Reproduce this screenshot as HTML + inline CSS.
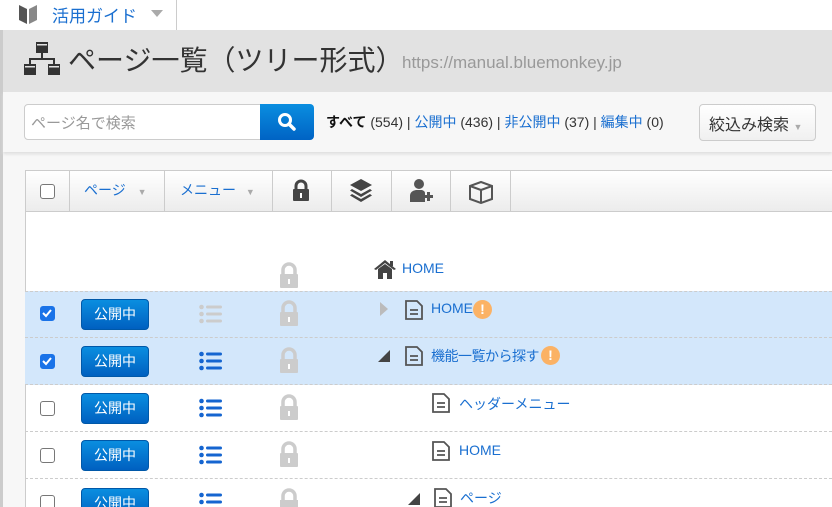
<!DOCTYPE html>
<html style="overflow:hidden;height:507px"><head><meta charset="utf-8"><style>
*{box-sizing:border-box;margin:0;padding:0}
body{width:832px;height:507px;overflow:hidden;background:#f7f7f7;font-family:"Liberation Sans","Noto Sans CJK JP",sans-serif;position:relative;color:#333}
.a{position:absolute}
.blue{color:#1a6fd0}
.cb{position:absolute;left:40px;width:15px;height:15px;border:1.5px solid #777;border-radius:3px;background:#fff}
.cb.on{background:#1a73e8;border-color:#1a73e8}
.btn{position:absolute;left:81px;width:68px;height:31px;border-radius:4px;background:linear-gradient(#0a8ee0,#0060c0);border:1px solid #0058a8;color:#fff;font-size:14px;text-align:center;line-height:29px}
.row{position:absolute;left:25px;width:807px;border-bottom:1px dashed #ccc}
.lnk{font-size:14px;color:#1a6fd0}
</style></head><body>
<div class="a" style="left:0;top:0;width:832px;height:30px;background:#fff"></div>
<div class="a" style="left:176px;top:0;width:1px;height:30px;background:#ccc"></div>
<svg class="a" style="left:18px;top:3px" width="20" height="22" viewBox="0 0 20 22"><path d="M1 2 L9 6 L9 21 L1 17Z" fill="#555"/><path d="M11 6 L19 2 L19 17 L11 21Z" fill="#888"/></svg>
<div class="a blue" style="left:52px;top:2px;font-size:17px">活用ガイド</div>
<div class="a" style="left:151px;top:10px;border:6px solid transparent;border-top:7px solid #aaa"></div>
<div class="a" style="left:0;top:30px;width:3px;height:477px;background:#ccc"></div>
<div class="a" style="left:3px;top:30px;width:829px;height:62px;background:#e2e2e2"></div>
<svg class="a" style="left:24px;top:42px" width="36" height="36" viewBox="0 0 36 36" fill="#333"><rect x="12" y="0" width="12" height="11"/><rect x="13" y="2" width="10" height="1.5" fill="#e2e2e2"/><rect x="17" y="11" width="2" height="6"/><rect x="5" y="16" width="26" height="2"/><rect x="5" y="16" width="2" height="6"/><rect x="29" y="16" width="2" height="6"/><rect x="0" y="22" width="12" height="11"/><rect x="24" y="22" width="12" height="11"/><rect x="1" y="24" width="10" height="1.5" fill="#e2e2e2"/><rect x="25" y="24" width="10" height="1.5" fill="#e2e2e2"/></svg>
<div class="a" style="left:68px;top:39px;font-size:28px;color:#333">ページ一覧（ツリー形式）</div>
<div class="a" style="left:402px;top:53px;font-size:17px;color:#999">https://manual.bluemonkey.jp</div>
<div class="a" style="left:3px;top:92px;width:829px;height:60px;background:#f7f7f7;box-shadow:0 2px 3px #ddd"></div>
<div class="a" style="left:24px;top:104px;width:237px;height:36px;background:#fff;border:1px solid #ccc;border-radius:4px 0 0 4px;font-size:15px;color:#999;padding:7px 6px">ページ名で検索</div>
<div class="a" style="left:260px;top:104px;width:54px;height:36px;background:linear-gradient(#0a8ee0,#0063c4);border-radius:0 4px 4px 0"></div>
<svg class="a" style="left:277px;top:112px" width="20" height="20" viewBox="0 0 20 20"><circle cx="8" cy="8" r="5.5" fill="none" stroke="#fff" stroke-width="3"/><path d="M12 12 L17 17" stroke="#fff" stroke-width="3.5" stroke-linecap="round"/></svg>
<div class="a" style="left:326px;top:112px;font-size:14px;color:#333;white-space:nowrap"><b style="font-weight:bold;color:#111">すべて</b> (554) | <span class="blue">公開中</span> (436) | <span class="blue">非公開中</span> (37) | <span class="blue">編集中</span> (0)</div>
<div class="a" style="left:699px;top:104px;width:117px;height:37px;border:1px solid #ccc;border-radius:4px;background:linear-gradient(#fff,#f0f0f0);font-size:16px;padding:6px 9px;color:#333;white-space:nowrap">絞込み検索 <span style="font-size:9px;color:#aaa">▼</span></div>
<div class="a" style="left:25px;top:170px;width:807px;height:337px;background:#fff;border-left:1px solid #ccc"></div>
<div class="a" style="left:25px;top:170px;width:807px;height:42px;background:linear-gradient(#fff,#ececec);border:1px solid #ccc;border-right:none"></div>
<div class="cb" style="top:184px"></div>
<div class="a" style="left:69px;top:171px;width:1px;height:40px;background:#ccc"></div>
<div class="a lnk" style="left:84px;top:180px">ページ <span style="color:#aaa;font-size:9px;margin-left:8px">▼</span></div>
<div class="a" style="left:164px;top:171px;width:1px;height:40px;background:#ccc"></div>
<div class="a lnk" style="left:180px;top:180px">メニュー <span style="color:#aaa;font-size:9px;margin-left:6px">▼</span></div>
<div class="a" style="left:272px;top:171px;width:1px;height:40px;background:#ccc"></div>
<svg class="a" style="left:292px;top:179px" width="18" height="22" viewBox="0 0 18 22"><path d="M4 10 V7 a5 5 0 0 1 10 0 V10" fill="none" stroke="#444" stroke-width="3"/><rect x="1" y="10" width="16" height="12" rx="1" fill="#444"/><rect x="8" y="14" width="2" height="5" fill="#fff"/></svg>
<div class="a" style="left:331px;top:171px;width:1px;height:40px;background:#ccc"></div>
<svg class="a" style="left:349px;top:178px" width="24" height="24" viewBox="0 0 24 24" fill="#444"><path d="M12 1 L23 7 L12 13 L1 7Z"/><path d="M3 11 L12 16 L21 11 L23 12.5 L12 19 L1 12.5Z"/><path d="M3 16 L12 21 L21 16 L23 17.5 L12 24 L1 17.5Z"/></svg>
<div class="a" style="left:391px;top:171px;width:1px;height:40px;background:#ccc"></div>
<svg class="a" style="left:408px;top:178px" width="26" height="26" viewBox="0 0 26 26" fill="#555"><circle cx="11" cy="6" r="5"/><path d="M2 24 V18 Q2 13 8 12 L14 12 Q17 13 17 15 V24Z"/><rect x="16" y="17" width="9" height="3" fill="#555"/><rect x="19" y="14" width="3" height="9"/></svg>
<div class="a" style="left:450px;top:171px;width:1px;height:40px;background:#ccc"></div>
<svg class="a" style="left:468px;top:180px" width="26" height="24" viewBox="0 0 26 24"><path d="M13 2 L24 6 V19 L13 23 L2 19 V6Z M2 6 L13 10 L24 6 M13 10 V23" fill="none" stroke="#555" stroke-width="2"/></svg>
<div class="a" style="left:510px;top:171px;width:1px;height:40px;background:#ccc"></div>
<svg class="a" style="left:279px;top:262px" width="20" height="26" viewBox="0 0 20 26"><path d="M4 12 V8 a6 6 0 0 1 12 0 V12" fill="none" stroke="#ccc" stroke-width="3.5"/><rect x="1" y="12" width="18" height="14" rx="1" fill="#ccc"/><rect x="9" y="17" width="2" height="5" fill="#fff"/></svg>
<svg class="a" style="left:374px;top:259px" width="22" height="20" viewBox="0 0 22 20" fill="#444"><path d="M11 1 L22 10 L20 11 L11 4 L2 11 L0 10Z"/><path d="M4 10 L11 5 L18 10 V20 H13 V14 H9 V20 H4Z"/><rect x="16" y="2" width="3" height="5"/></svg>
<div class="a lnk" style="left:402px;top:260px">HOME</div>

<div class="row" style="top:291px;height:47px;background:#d3e7fb;border-top:1px dashed #ccc"></div>
<div class="row" style="top:338px;height:47px;background:#d3e7fb"></div>
<div class="row" style="top:385px;height:47px"></div>
<div class="row" style="top:432px;height:47px"></div>
<div class="row" style="top:479px;height:28px;border-bottom:none"></div>
<div class="cb on" style="top:306px"><svg width="12" height="12" viewBox="0 0 12 12" style="position:absolute;left:0;top:0"><path d="M2 6 L5 9 L10 3" stroke="#fff" stroke-width="2" fill="none"/></svg></div>
<div class="cb on" style="top:354px"><svg width="12" height="12" viewBox="0 0 12 12" style="position:absolute;left:0;top:0"><path d="M2 6 L5 9 L10 3" stroke="#fff" stroke-width="2" fill="none"/></svg></div>
<div class="cb" style="top:401px"></div>
<div class="cb" style="top:448px"></div>
<div class="cb" style="top:495px"></div>
<div class="btn" style="top:299px">公開中</div>
<div class="btn" style="top:346px">公開中</div>
<div class="btn" style="top:393px">公開中</div>
<div class="btn" style="top:440px">公開中</div>
<div class="btn" style="top:488px">公開中</div>
<svg class="a" style="left:199px;top:304px" width="24" height="20" viewBox="0 0 24 20" fill="#ccc"><circle cx="2.5" cy="3" r="2.3"/><circle cx="2.5" cy="10" r="2.3"/><circle cx="2.5" cy="17" r="2.3"/><rect x="7" y="1.5" width="16" height="3" rx="1.5"/><rect x="7" y="8.5" width="16" height="3" rx="1.5"/><rect x="7" y="15.5" width="16" height="3" rx="1.5"/></svg>
<svg class="a" style="left:199px;top:351px" width="24" height="20" viewBox="0 0 24 20" fill="#1565d0"><circle cx="2.5" cy="3" r="2.3"/><circle cx="2.5" cy="10" r="2.3"/><circle cx="2.5" cy="17" r="2.3"/><rect x="7" y="1.5" width="16" height="3" rx="1.5"/><rect x="7" y="8.5" width="16" height="3" rx="1.5"/><rect x="7" y="15.5" width="16" height="3" rx="1.5"/></svg>
<svg class="a" style="left:199px;top:398px" width="24" height="20" viewBox="0 0 24 20" fill="#1565d0"><circle cx="2.5" cy="3" r="2.3"/><circle cx="2.5" cy="10" r="2.3"/><circle cx="2.5" cy="17" r="2.3"/><rect x="7" y="1.5" width="16" height="3" rx="1.5"/><rect x="7" y="8.5" width="16" height="3" rx="1.5"/><rect x="7" y="15.5" width="16" height="3" rx="1.5"/></svg>
<svg class="a" style="left:199px;top:445px" width="24" height="20" viewBox="0 0 24 20" fill="#1565d0"><circle cx="2.5" cy="3" r="2.3"/><circle cx="2.5" cy="10" r="2.3"/><circle cx="2.5" cy="17" r="2.3"/><rect x="7" y="1.5" width="16" height="3" rx="1.5"/><rect x="7" y="8.5" width="16" height="3" rx="1.5"/><rect x="7" y="15.5" width="16" height="3" rx="1.5"/></svg>
<svg class="a" style="left:199px;top:492px" width="24" height="15" viewBox="0 0 24 15" fill="#1565d0"><circle cx="2.5" cy="3" r="2.3"/><circle cx="2.5" cy="10" r="2.3"/><rect x="7" y="1.5" width="16" height="3" rx="1.5"/><rect x="7" y="8.5" width="16" height="3" rx="1.5"/></svg>
<svg class="a" style="left:279px;top:300px" width="20" height="26" viewBox="0 0 20 26"><path d="M4 12 V8 a6 6 0 0 1 12 0 V12" fill="none" stroke="#ccc" stroke-width="3.5"/><rect x="1" y="12" width="18" height="14" rx="1" fill="#ccc"/><rect x="9" y="17" width="2" height="5" fill="#fff"/></svg>
<svg class="a" style="left:279px;top:347px" width="20" height="26" viewBox="0 0 20 26"><path d="M4 12 V8 a6 6 0 0 1 12 0 V12" fill="none" stroke="#ccc" stroke-width="3.5"/><rect x="1" y="12" width="18" height="14" rx="1" fill="#ccc"/><rect x="9" y="17" width="2" height="5" fill="#fff"/></svg>
<svg class="a" style="left:279px;top:394px" width="20" height="26" viewBox="0 0 20 26"><path d="M4 12 V8 a6 6 0 0 1 12 0 V12" fill="none" stroke="#ccc" stroke-width="3.5"/><rect x="1" y="12" width="18" height="14" rx="1" fill="#ccc"/><rect x="9" y="17" width="2" height="5" fill="#fff"/></svg>
<svg class="a" style="left:279px;top:441px" width="20" height="26" viewBox="0 0 20 26"><path d="M4 12 V8 a6 6 0 0 1 12 0 V12" fill="none" stroke="#ccc" stroke-width="3.5"/><rect x="1" y="12" width="18" height="14" rx="1" fill="#ccc"/><rect x="9" y="17" width="2" height="5" fill="#fff"/></svg>
<svg class="a" style="left:279px;top:488px" width="20" height="19" viewBox="0 0 20 19"><path d="M4 12 V8 a6 6 0 0 1 12 0 V12" fill="none" stroke="#ccc" stroke-width="3.5"/><rect x="1" y="12" width="18" height="7" fill="#ccc"/></svg>
<div class="a" style="left:380px;top:302px;border:5px solid transparent;border-left:8px solid #bbb;border-top-width:7px;border-bottom-width:7px"></div>
<svg class="a" style="left:405px;top:300px" width="18" height="20" viewBox="0 0 18 20"><path d="M1 1 H12 L17 6 V19 H1Z" fill="none" stroke="#555" stroke-width="1.8"/><path d="M5 10 H13 M5 14 H13" stroke="#555" stroke-width="1.8"/></svg>
<div class="a lnk" style="left:431px;top:300px">HOME</div>
<div class="a" style="left:473px;top:300px;width:19px;height:19px;border-radius:50%;background:#fbb265;color:#fff;font-weight:bold;text-align:center;font-size:14px;line-height:19px">!</div>
<svg class="a" style="left:378px;top:350px" width="12" height="12" viewBox="0 0 12 12"><path d="M12 0 V12 H0Z" fill="#444"/></svg>
<svg class="a" style="left:405px;top:346px" width="18" height="20" viewBox="0 0 18 20"><path d="M1 1 H12 L17 6 V19 H1Z" fill="none" stroke="#555" stroke-width="1.8"/><path d="M5 10 H13 M5 14 H13" stroke="#555" stroke-width="1.8"/></svg>
<div class="a lnk" style="left:431px;top:346px;letter-spacing:-0.5px">機能一覧から探す</div>
<div class="a" style="left:541px;top:346px;width:19px;height:19px;border-radius:50%;background:#fbb265;color:#fff;font-weight:bold;text-align:center;font-size:14px;line-height:19px">!</div>
<svg class="a" style="left:432px;top:393px" width="18" height="20" viewBox="0 0 18 20"><path d="M1 1 H12 L17 6 V19 H1Z" fill="none" stroke="#555" stroke-width="1.8"/><path d="M5 10 H13 M5 14 H13" stroke="#555" stroke-width="1.8"/></svg>
<div class="a lnk" style="left:459px;top:394px">ヘッダーメニュー</div>
<svg class="a" style="left:432px;top:441px" width="18" height="20" viewBox="0 0 18 20"><path d="M1 1 H12 L17 6 V19 H1Z" fill="none" stroke="#555" stroke-width="1.8"/><path d="M5 10 H13 M5 14 H13" stroke="#555" stroke-width="1.8"/></svg>
<div class="a lnk" style="left:459px;top:442px">HOME</div>
<svg class="a" style="left:408px;top:493px" width="12" height="12" viewBox="0 0 12 12"><path d="M12 0 V12 H0Z" fill="#444"/></svg>
<svg class="a" style="left:434px;top:488px" width="18" height="19" viewBox="0 0 18 19"><path d="M1 1 H12 L17 6 V19 H1Z" fill="none" stroke="#555" stroke-width="1.8"/><path d="M5 10 H13 M5 14 H13" stroke="#555" stroke-width="1.8"/></svg>
<div class="a lnk" style="left:460px;top:488px">ページ</div>
</body></html>
